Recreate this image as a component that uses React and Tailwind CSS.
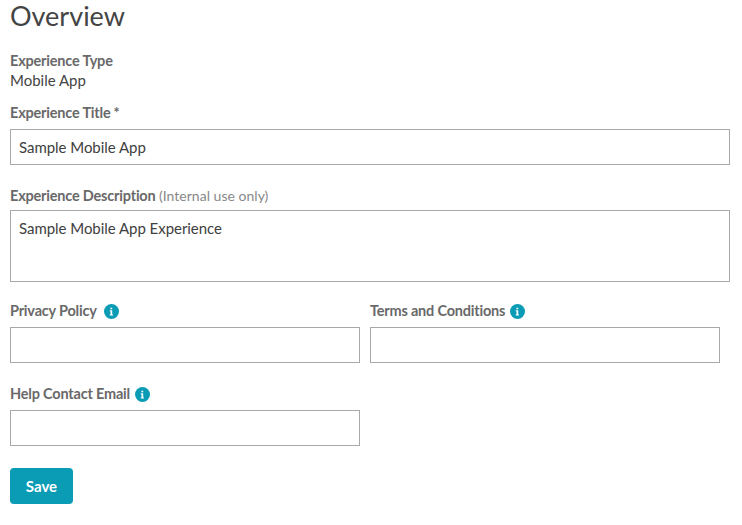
function Info() {
  return (
    <svg className="mt-px size-[15px] shrink-0" viewBox="0 0 15 15" aria-label="Info">
      <circle cx="7.5" cy="7.5" r="7.5" fill="#0a9bb5" />
      <path fill="#fff" d="M6.4 3.7h1.8v1.5H6.4zM5.7 6.2h2.5v4.2h.8v1H5.7v-1h.8V7.2h-.8z" />
    </svg>
  );
}

function Label({ children, info, note, width = "" }) {
  return (
    <div className="flex h-5 items-center text-[14.5px] leading-5 font-bold tracking-[-0.2px] whitespace-nowrap text-[#696969]">
      <span className={`-mt-px ${width}`}>{children}</span>
      {note && <span className="text-sm font-normal tracking-[0.02px] text-[#888]">{note}</span>}
      {info && <Info />}
    </div>
  );
}

const field = "block w-full resize-none border border-[#a9a9a9] bg-white px-2 text-[15px] tracking-[-0.04px] text-[#404040] outline-none";

export default function App() {
  return (
    <main className="h-[525px] w-[742px] overflow-hidden bg-white pr-3 pl-[10px] font-[Lato,sans-serif] text-[#444]">
      <h1 className="h-[51px] text-[27px] leading-8 font-normal text-[#444]">Overview</h1>
      <Label>Experience Type</Label>
      <p className="-mt-px text-[15px] leading-5">Mobile App</p>
      <div className="mt-[13px]">
        <Label>Experience Title<span className="ml-[3px]">*</span></Label>
        <input className={`${field} mt-[6px] h-9`} defaultValue="Sample Mobile App" />
      </div>
      <div className="mt-[21px]">
        <Label width="w-[149px]" note="(Internal use only)">Experience Description</Label>
        <textarea className={`${field} mt-1 h-[72px] py-[7px] leading-[21px]`} defaultValue="Sample Mobile App Experience" />
      </div>
      <div className="mt-[19px] grid grid-cols-[350px_350px] gap-x-[10px] gap-y-[21px]">
        <div>
          <Label info width="w-[94px]">Privacy Policy</Label>
          <input className={`${field} mt-[6px] h-9`} />
        </div>
        <div>
          <Label info width="w-[140px]">Terms and Conditions</Label>
          <input className={`${field} mt-[6px] h-9`} />
        </div>
        <div>
          <Label info width="w-[125px]">Help Contact Email</Label>
          <input className={`${field} mt-[6px] h-9`} />
        </div>
      </div>
      <button className="mt-[22px] h-9 w-[63px] rounded-[4px] bg-[#0a9bb5] text-[15px] font-bold text-white">Save</button>
    </main>
  );
}
